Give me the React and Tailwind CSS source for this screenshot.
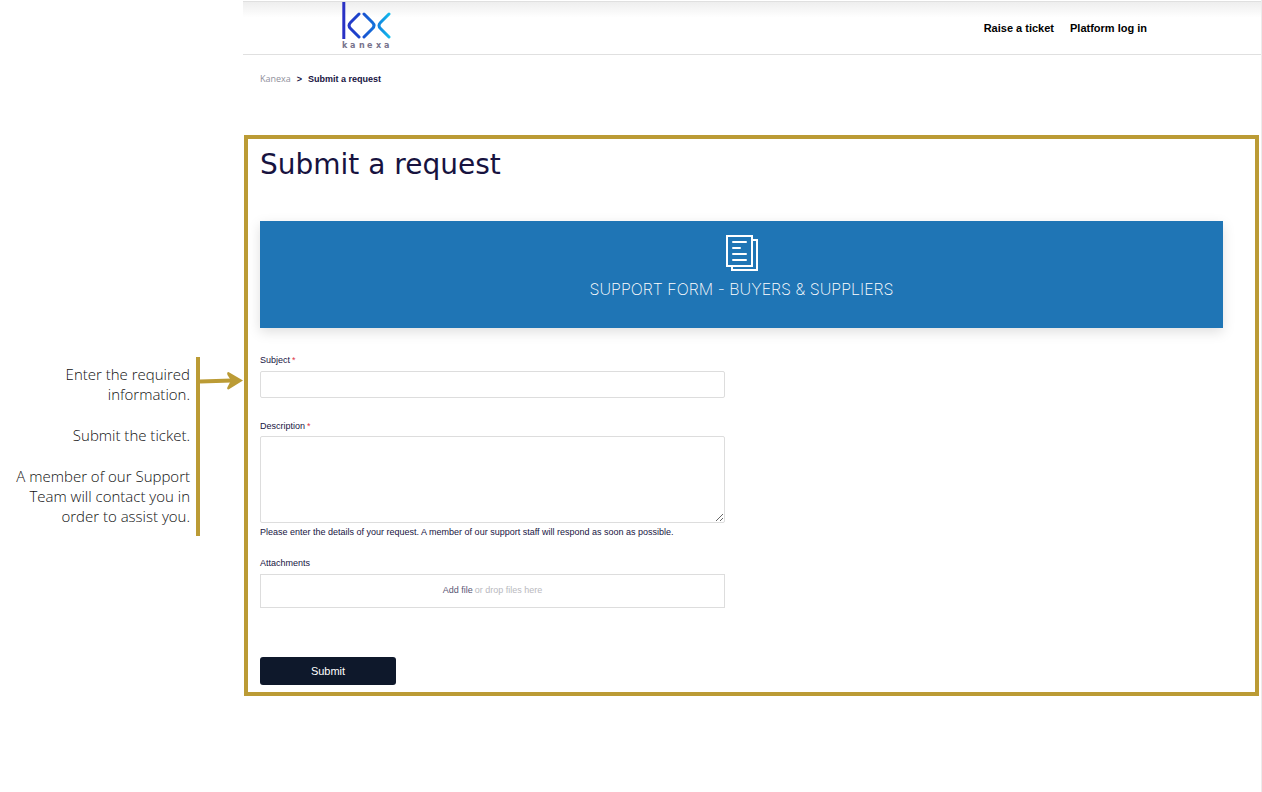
import React from 'react';

function Logo() {
  return (
    <a href="#home" aria-label="Kanexa home" className="flex flex-col items-start">
      <svg width="49" height="37" viewBox="0 0 49 37" fill="none" aria-hidden="true">
        <defs>
          <linearGradient id="kx" x1="0" y1="0" x2="49" y2="0" gradientUnits="userSpaceOnUse">
            <stop offset="0" stopColor="#2b2fc4" />
            <stop offset="0.35" stopColor="#1b45cc" />
            <stop offset="0.7" stopColor="#1377dc" />
            <stop offset="1" stopColor="#12c3ee" />
          </linearGradient>
        </defs>
        <g stroke="url(#kx)" strokeWidth="3">
          <path d="M1.8 0V37" />
          <path d="M17 12 8.500 20.500Q5.500 23.500 8.500 26.500L17 35" strokeLinecap="round" />
          <path d="M22 12 30.500 20.500Q33.500 23.500 30.500 26.500L22 35" strokeLinecap="round" />
          <path d="M47 12 38.500 20.500Q35.500 23.500 38.500 26.500L47 35" strokeLinecap="round" />
        </g>
      </svg>
      <svg width="49" height="10" viewBox="0 0 49 10" aria-hidden="true">
        <g fill="#77738c" fontFamily="DejaVu Sans" fontSize="8" fontWeight="bold">
          <text x="0" y="9">k</text>
          <text x="8" y="9">a</text>
          <text x="17" y="9">n</text>
          <text x="25" y="9">e</text>
          <text x="34" y="9">x</text>
          <text x="42" y="9">a</text>
        </g>
      </svg>
    </a>
  );
}

function DocumentsIcon() {
  return (
    <svg width="32" height="36" viewBox="0 0 32 36" fill="none" stroke="#fff" strokeWidth="2" aria-hidden="true">
      <path d="M1 1H26V31H1Z" />
      <path d="M26 5H31V35H6V31" />
      <g strokeLinecap="round">
        <path d="M7 7H20" />
        <path d="M7 13H14" />
        <path d="M7 19H20" />
        <path d="M7 25H20" />
      </g>
    </svg>
  );
}

function Instructions() {
  return (
    <aside className="flex w-[243px] shrink-0 items-start pt-[357px]">
      <div className="flex flex-1 flex-col gap-[21px] border-r-4 border-[#bb9b35] pt-[7px] pr-1.5 pb-[10px] pl-3 text-right font-['Open_Sans',sans-serif] text-[15px] leading-5 font-light text-[#111111]">
        <p>Enter the required information.</p>
        <p>Submit the ticket.</p>
        <p>A member of our Support Team will contact you in order to assist you.</p>
      </div>
      <svg width="43" height="48" viewBox="0 0 43 48" className="shrink-0" aria-hidden="true">
        <path d="M0 24.500 32 23.500" stroke="#bb9b35" strokeWidth="4" />
        <path d="M28.500 15 43 23.500 28.500 32.500Q26.500 32.500 27.500 30L31 23.500 27.500 18Q26.500 15 28.500 15Z" fill="#bb9b35" />
      </svg>
    </aside>
  );
}

function Label({ htmlFor, required, children }) {
  return (
    <label htmlFor={htmlFor} className="flex text-[9px] leading-3">
      {children}
      {required && <span className="pl-0.5 text-[#e0364a]">*</span>}
    </label>
  );
}

export default function App() {
  return (
    <div className="flex min-h-screen bg-white font-['Liberation_Sans',Arial,sans-serif] text-[#17133f]">
      <Instructions />
      <div className="min-w-0 flex-1 border-r border-[#ececec]">
        <header className="mt-px flex h-[54px] items-center justify-between border-t border-b border-[#e0e0e0] bg-linear-to-b from-[#eeeeee] to-white to-30% pr-[114px] pb-[5px] pl-[99px]">
          <Logo />
          <nav className="flex gap-4 pt-[5px] text-[11px] font-bold text-black">
            <a href="#ticket">Raise a ticket</a>
            <a href="#login">Platform log in</a>
          </nav>
        </header>

        <nav aria-label="Breadcrumb" className="flex gap-1.5 pt-[18px] pl-[17px] text-[9px] leading-3">
          <a href="#kanexa" className="font-['Open_Sans',sans-serif] text-[#8f8f9c]">Kanexa</a>
          <span className="font-bold">&gt;</span>
          <span className="font-bold">Submit a request</span>
        </nav>

        <main className="mt-[50px] mr-0.5 ml-px border-4 border-[#bb9b35] pt-2 pr-8 pb-[7px] pl-3">
          <h1 className="font-['DejaVu_Sans',sans-serif] text-[28px] leading-9">Submit a request</h1>

          <section className="mt-[38px] flex flex-col items-center bg-[#1f75b5] pt-[14px] pb-[29px] text-white shadow-[0_4px_12px_rgba(0,0,0,0.13)]">
            <DocumentsIcon />
            <h2 className="mt-2 font-['Inter',sans-serif] text-[16px] leading-5 font-extralight">SUPPORT FORM - BUYERS &amp; SUPPLIERS</h2>
          </section>

          <form className="mt-[26px] flex max-w-[465px] flex-col" onSubmit={(e) => e.preventDefault()}>
            <Label htmlFor="subject" required>Subject</Label>
            <input id="subject" type="text" className="mt-[5px] h-[27px] rounded-xs border border-[#dddddd] px-2 text-[11px]" />

            <div className="mt-[22px] flex flex-col">
              <Label htmlFor="description" required>Description</Label>
              <textarea id="description" className="mt-1 h-[87px] resize-y rounded-xs border border-[#dddddd] p-2 text-[11px]" />
              <p className="mt-[3px] text-[9px] leading-3">
                Please enter the details of your request. A member of our support staff will respond as soon as possible.
              </p>
            </div>

            <div className="mt-[19px] flex flex-col">
              <Label htmlFor="attachments">Attachments</Label>
              <label className="mt-[5px] flex h-[34px] items-center justify-center gap-0.5 border border-[#dddddd] text-[9px] text-[#b9b9c0]">
                <input id="attachments" type="file" multiple className="sr-only" />
                <span className="text-[#5b5875]">Add file</span>
                <span>or drop files here</span>
              </label>
            </div>

            <button type="submit" className="mt-[49px] h-7 w-[136px] rounded-[3px] bg-[#0e182b] text-[11px] text-white">
              Submit
            </button>
          </form>
        </main>
      </div>
    </div>
  );
}
